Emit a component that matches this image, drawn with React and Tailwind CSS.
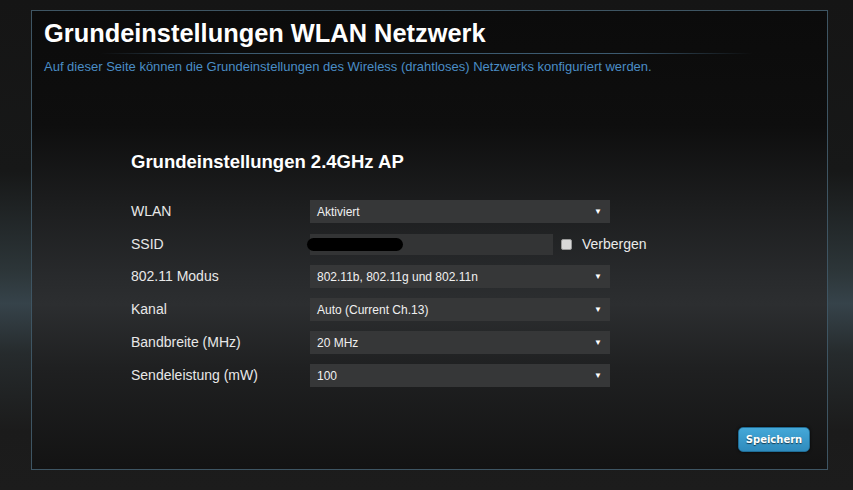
const rows = [
  { label: "WLAN", value: "Aktiviert" },
  { label: "SSID", ssid: true },
  { label: "802.11 Modus", value: "802.11b, 802.11g und 802.11n" },
  { label: "Kanal", value: "Auto (Current Ch.13)" },
  { label: "Bandbreite (MHz)", value: "20 MHz" },
  { label: "Sendeleistung (mW)", value: "100" },
];

const Select = ({ value }) => (
  <div className="flex h-[23px] w-[300px] items-center justify-between bg-[#363738] pl-[7px] pr-[8px] text-[12px] text-[#f0f0f0]">
    <span>{value}</span>
    <span className="text-[8px] text-white">▼</span>
  </div>
);

const SsidField = () => (
  <div className="flex items-center">
    <div className="flex h-[21px] w-[243px] items-center bg-[#333435]">
      <div className="-ml-[3px] h-[13px] w-[96px] rounded-[7px] bg-black" />
    </div>
    <div className="ml-[8px] h-[11px] w-[11px] rounded-[2px] border border-[#999] bg-[#d8d8d8]" />
    <span className="ml-[10px] text-[14px] text-[#eaeaea]">Verbergen</span>
  </div>
);

export default function App() {
  return (
    <div
      className="h-[490px] w-full overflow-hidden bg-[linear-gradient(to_bottom,#151515_0%,#171818_35%,#2c3538_55%,#36434a_62%,#262b2d_72%,#1b1b1b_88%,#1c1c1c_100%)] pl-[31px] pt-[10px]"
      style={{ fontFamily: '"Liberation Sans", Arial, sans-serif' }}
    >
      <div className="flex h-[460px] w-[797px] flex-col border border-[#3e5563] bg-[linear-gradient(to_bottom,#0b0b0b_0%,#0e0e0e_25%,#1c1d1e_42%,#282a2c_58%,#2c2e30_64%,#1f2021_78%,#131313_100%)]">
        <h1 className="mt-[8px] pl-[12px] text-[25.4px] font-bold leading-[28px] text-white">
          Grundeinstellungen WLAN Netzwerk
        </h1>
        <div className="ml-[68px] mt-[6px] h-px w-[653px] bg-[linear-gradient(to_right,transparent,#3c5a70_20%,#3c5a70_80%,transparent)]" />
        <p className="mt-[5px] pl-[12px] text-[13px] leading-[16px] text-[#4a8dc6]">
          Auf dieser Seite können die Grundeinstellungen des Wireless (drahtloses) Netzwerks konfiguriert werden.
        </p>

        <div className="mt-[76px] pl-[99px]">
          <h2 className="text-[18.5px] font-bold leading-[22px] text-white">
            Grundeinstellungen 2.4GHz AP
          </h2>
          <div className="mt-[27px] flex flex-col gap-[10px]">
            {rows.map((row) => (
              <div
                key={row.label}
                className={row.ssid ? "flex h-[22px] items-center" : "flex h-[23px] items-center"}
              >
                <span className="w-[179px] text-[14px] text-[#e8e8e8]">{row.label}</span>
                {row.ssid ? <SsidField /> : <Select value={row.value} />}
              </div>
            ))}
          </div>
        </div>

        <button
          className="mb-[17px] mr-[17px] mt-auto flex h-[25px] w-[72px] items-center justify-center self-end rounded-[5px] border border-[#1f6d96] bg-[linear-gradient(to_bottom,#45a8d8,#2f8bbd)] text-[10px] font-bold text-white shadow-[0_0_3px_rgba(0,0,0,0.8)] [text-shadow:0_1px_1px_rgba(0,0,0,0.6)]"
          style={{ fontFamily: '"DejaVu Sans", Verdana, sans-serif' }}
        >
          Speichern
        </button>
      </div>
    </div>
  );
}
